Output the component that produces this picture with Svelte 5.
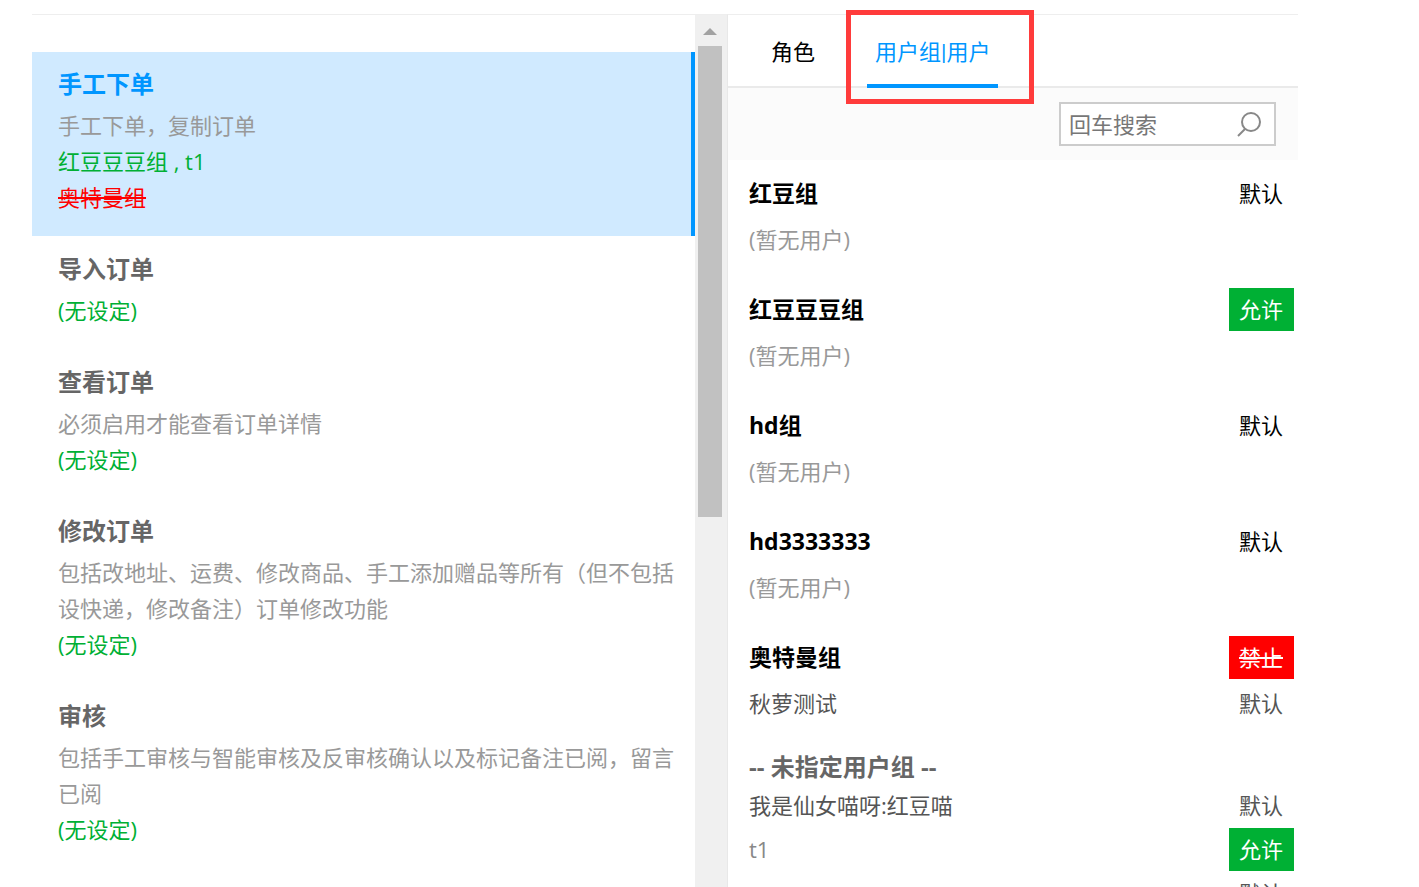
<script lang="ts">
	interface Permission {
		name: string;
		desc?: string;
		allowed?: string;
		denied?: string;
	}

	interface Rule {
		name: string;
		state?: 'default' | 'allow' | 'deny';
	}

	interface Group extends Rule {
		users: Rule[];
	}

	const labels = { default: '默认', allow: '允许', deny: '禁止' };

	const permissions: Permission[] = [
		{ name: '手工下单', desc: '手工下单，复制订单', allowed: '红豆豆豆组 , t1', denied: '奥特曼组' },
		{ name: '导入订单' },
		{ name: '查看订单', desc: '必须启用才能查看订单详情' },
		{
			name: '修改订单',
			desc: '包括改地址、运费、修改商品、手工添加赠品等所有（但不包括设快递，修改备注）订单修改功能'
		},
		{ name: '审核', desc: '包括手工审核与智能审核及反审核确认以及标记备注已阅，留言已阅' }
	];

	const groups: Group[] = [
		{ name: '红豆组', state: 'default', users: [] },
		{ name: '红豆豆豆组', state: 'allow', users: [] },
		{ name: 'hd组', state: 'default', users: [] },
		{ name: 'hd3333333', state: 'default', users: [] },
		{ name: '奥特曼组', state: 'deny', users: [{ name: '秋萝测试', state: 'default' }] }
	];

	const ungrouped: Rule[] = [
		{ name: '我是仙女喵呀:红豆喵', state: 'default' },
		{ name: 't1', state: 'allow' },
		{ name: '', state: 'default' }
	];

	const tabs = ['角色', '用户组|用户'];

	let selected = $state(0);
	let activeTab = $state(1);
	let keyword = $state('');
</script>

{#snippet stateButton(rule: Rule)}
	{@const state = rule.state ?? 'default'}
	<button type="button" class="state {state}">{labels[state]}</button>
{/snippet}

<div class="page">
	<section class="permissions">
		<ul class="permission-list">
			{#each permissions as item, i}
				<li class="permission" class:selected={selected === i}>
					<button type="button" class="permission-btn" onclick={() => (selected = i)}>
						<strong class="permission-name">{item.name}</strong>
						{#if item.desc}<span class="desc">{item.desc}</span>{/if}
						<span class="allowed">{item.allowed ?? '(无设定)'}</span>
						{#if item.denied}<span class="denied">{item.denied}</span>{/if}
					</button>
				</li>
			{/each}
		</ul>
		<div class="scrollbar" aria-hidden="true">
			<div class="arrow"></div>
			<div class="thumb"></div>
		</div>
	</section>

	<section class="members">
		<div class="tabs" role="tablist">
			{#each tabs as tab, i}
				<button
					type="button"
					role="tab"
					class="tab"
					class:active={activeTab === i}
					aria-selected={activeTab === i}
					onclick={() => (activeTab = i)}
				>
					{tab}
					{#if i === 1}<span class="marker"></span>{/if}
				</button>
			{/each}
		</div>

		<div class="toolbar">
			<label class="search">
				<input type="text" placeholder="回车搜索" aria-label="回车搜索" bind:value={keyword} />
				<svg width="24" height="26" viewBox="0 0 24 26" fill="none" stroke="#888" stroke-width="2">
					<circle cx="14" cy="11" r="9" />
					<path d="M8 18L1 25" />
				</svg>
			</label>
		</div>

		<div class="group-list">
			{#each groups as group}
				<div class="group">
					<div class="row">
						<h3>{group.name}</h3>
						{@render stateButton(group)}
					</div>
					{#each group.users as user}
						<div class="row user">
							<span>{user.name}</span>
							{@render stateButton(user)}
						</div>
					{:else}
						<div class="row empty">(暂无用户)</div>
					{/each}
				</div>
			{/each}

			<h3 class="ungrouped-title">-- 未指定用户组 --</h3>
			{#each ungrouped as user}
				<div class="row user">
					<span class:latin={user.name.startsWith('t')}>{user.name}</span>
					{@render stateButton(user)}
				</div>
			{/each}
		</div>
	</section>
</div>

<style>
	:global(body) {
		background: #fff;
	}

	.page {
		box-sizing: border-box;
		display: grid;
		grid-template-columns: minmax(0, 695fr) minmax(0, 571fr);
		grid-template-rows: minmax(0, 1fr);
		height: 100vh;
		padding: 14px 121px 0 32px;
		overflow: hidden;
		font-family: 'Open Sans', 'Noto Sans CJK SC', sans-serif;
		font-size: 22px;
		line-height: 36px;
		color: #000;
	}

	button {
		padding: 0;
		border: 0;
		background: none;
		font: inherit;
		color: inherit;
		cursor: pointer;
	}

	.permissions {
		display: flex;
		min-height: 0;
		border-top: 1px solid #eee;
	}

	.permission-list {
		flex: 1;
		min-width: 0;
		margin: 0;
		padding: 37px 0 0;
		list-style: none;
		overflow: hidden;
	}

	.permission {
		border-right: 4px solid transparent;
	}

	.permission.selected {
		background: #d0eaff;
		border-right-color: #0096ff;
	}

	.permission-btn {
		display: flex;
		flex-direction: column;
		width: 100%;
		padding: 11px 10px 21px 26px;
		text-align: left;
	}

	.permission + .permission .permission-btn {
		padding-top: 12px;
	}

	.permission-name {
		margin-bottom: 2px;
		font-size: 24px;
		line-height: 42px;
		color: #666;
	}

	.selected .permission-name {
		color: #0096ff;
	}

	.desc {
		color: #999;
	}

	.allowed {
		color: #00b034;
	}

	.denied {
		color: #f00;
		text-decoration: line-through;
		align-self: flex-start;
	}

	.scrollbar {
		display: flex;
		flex-direction: column;
		width: 32px;
		background: #f0f0f0;
	}

	.arrow {
		width: 0;
		margin: 13px 0 11px 8px;
		border: 7px solid transparent;
		border-top: 0;
		border-bottom-color: #a2a2a2;
	}

	.thumb {
		width: 24px;
		height: 54%;
		margin-left: 3px;
		background: #c1c1c1;
	}

	.members {
		min-height: 0;
		border-top: 1px solid #eee;
		border-left: 1px solid #e8e8e8;
	}

	.tabs {
		display: flex;
		gap: 44px;
		padding-left: 35px;
		border-bottom: 2px solid #eaeaea;
	}

	.tab {
		position: relative;
		height: 73px;
		margin-bottom: -2px;
		padding: 6px 8px 0;
		border-bottom: 4px solid transparent;
		font-family: Roboto, 'Noto Sans CJK SC', sans-serif;
	}

	.tab.active {
		color: #0096ff;
		border-bottom-color: #0096ff;
	}

	.marker {
		position: absolute;
		inset: -5px -36px -20px -21px;
		border: 5px solid #ff3b3b;
		pointer-events: none;
	}

	.toolbar {
		display: flex;
		justify-content: flex-end;
		padding: 14px 22px;
		background: #fbfbfb;
	}

	.search {
		display: flex;
		align-items: center;
		box-sizing: border-box;
		width: 217px;
		height: 44px;
		padding: 0 13px 0 8px;
		border: 2px solid #ccc;
		background: #fff;
	}

	.search input {
		flex: 1;
		min-width: 0;
		padding: 0;
		border: 0;
		outline: none;
		background: none;
		font: inherit;
		color: #333;
	}

	.search input::placeholder {
		color: #777;
		opacity: 1;
	}

	.group-list {
		padding: 11px 4px 0 21px;
	}

	.group {
		display: flex;
		flex-direction: column;
		gap: 2px;
		margin-bottom: 26px;
	}

	.row {
		display: flex;
		align-items: center;
		justify-content: space-between;
		height: 44px;
	}

	h3 {
		margin: 0;
		font-size: 23px;
		font-weight: bold;
	}

	.ungrouped-title {
		font-size: 24px;
		line-height: 32px;
		color: #666;
	}

	.user {
		color: #555;
	}

	.empty {
		color: #999;
	}

	.latin {
		color: #888;
	}

	.state {
		height: 43px;
		padding: 0 11px 0 10px;
	}

	.state.allow {
		background: #00b034;
		color: #fff;
	}

	.state.deny {
		background: #f00;
		color: #fff;
		text-decoration: line-through;
	}
</style>
